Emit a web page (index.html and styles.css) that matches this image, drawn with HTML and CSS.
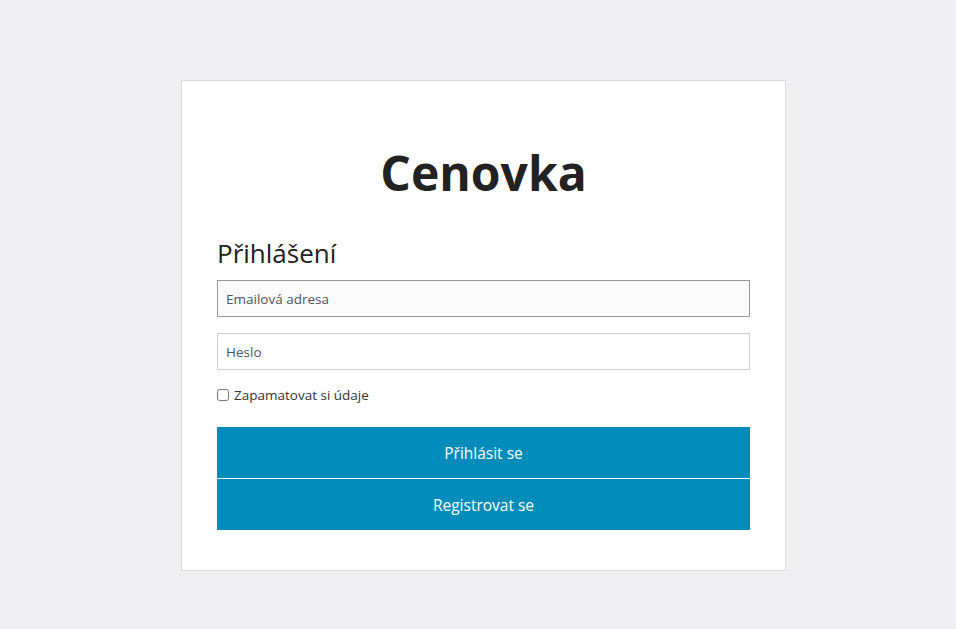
FILE: index.html
```html
<!DOCTYPE html>
<html lang="cs">
<head>
<meta charset="utf-8">
<title>Cenovka</title>
<link rel="stylesheet" href="styles.css">
</head>
<body>
<main class="page">
  <section class="card">
    <h1 class="brand">Cenovka</h1>
    <h2 class="heading">Přihlášení</h2>
    <form class="form">
      <input class="field field-focus" type="email" placeholder="Emailová adresa">
      <input class="field" type="password" placeholder="Heslo">
      <label class="remember"><input type="checkbox" class="check"> Zapamatovat si údaje</label>
      <div class="buttons">
        <button type="button" class="btn">Přihlásit se</button>
        <button type="button" class="btn">Registrovat se</button>
      </div>
    </form>
  </section>
</main>
</body>
</html>
```
FILE: styles.css
```css
* { box-sizing: border-box; }
html, body { margin: 0; padding: 0; }
body {
  background: #efeff1;
  font-family: "Open Sans", "Noto Sans", sans-serif;
  color: #222;
  min-height: 629px;
}
.page {
  display: flex;
  justify-content: center;
  padding-top: 80px;
  padding-left: 11px;
}
.card {
  width: 605px;
  background: #fff;
  border: 1px solid #dcdcdc;
  padding: 36px 35px 40px 35px;
}
.brand {
  margin: 24px 0 0 0;
  text-align: center;
  font-size: 48px;
  line-height: 64px;
  font-weight: 700;
  color: #222;
}
.heading {
  margin: 31px 0 0 0;
  font-size: 26px;
  line-height: 34px;
  font-weight: 400;
  color: #222;
}
.form {
  display: flex;
  flex-direction: column;
  margin-top: 10px;
}
.field {
  height: 37px;
  width: 100%;
  border: 1px solid #ccc;
  background: #fff;
  padding: 0 8px;
  font-family: inherit;
  font-size: 13.5px;
  color: #333;
  margin-bottom: 16px;
  outline: none;
}
.field::placeholder { color: #4f5560; }
.field-focus { border-color: #999; background: #fafafa; }
.remember {
  display: flex;
  align-items: center;
  gap: 3px;
  font-size: 13.5px;
  color: #333;
  height: 18px;
  margin-top: 0;
}
.check { margin: 0 2px 0 0; width: 12px; height: 12px; }
.buttons {
  margin-top: 23px;
  display: flex;
  flex-direction: column;
  gap: 1px;
}
.btn {
  height: 51px;
  border: 0;
  background: #008cba;
  color: #fff;
  font-family: inherit;
  font-size: 15.5px;
  cursor: pointer;
}
```
